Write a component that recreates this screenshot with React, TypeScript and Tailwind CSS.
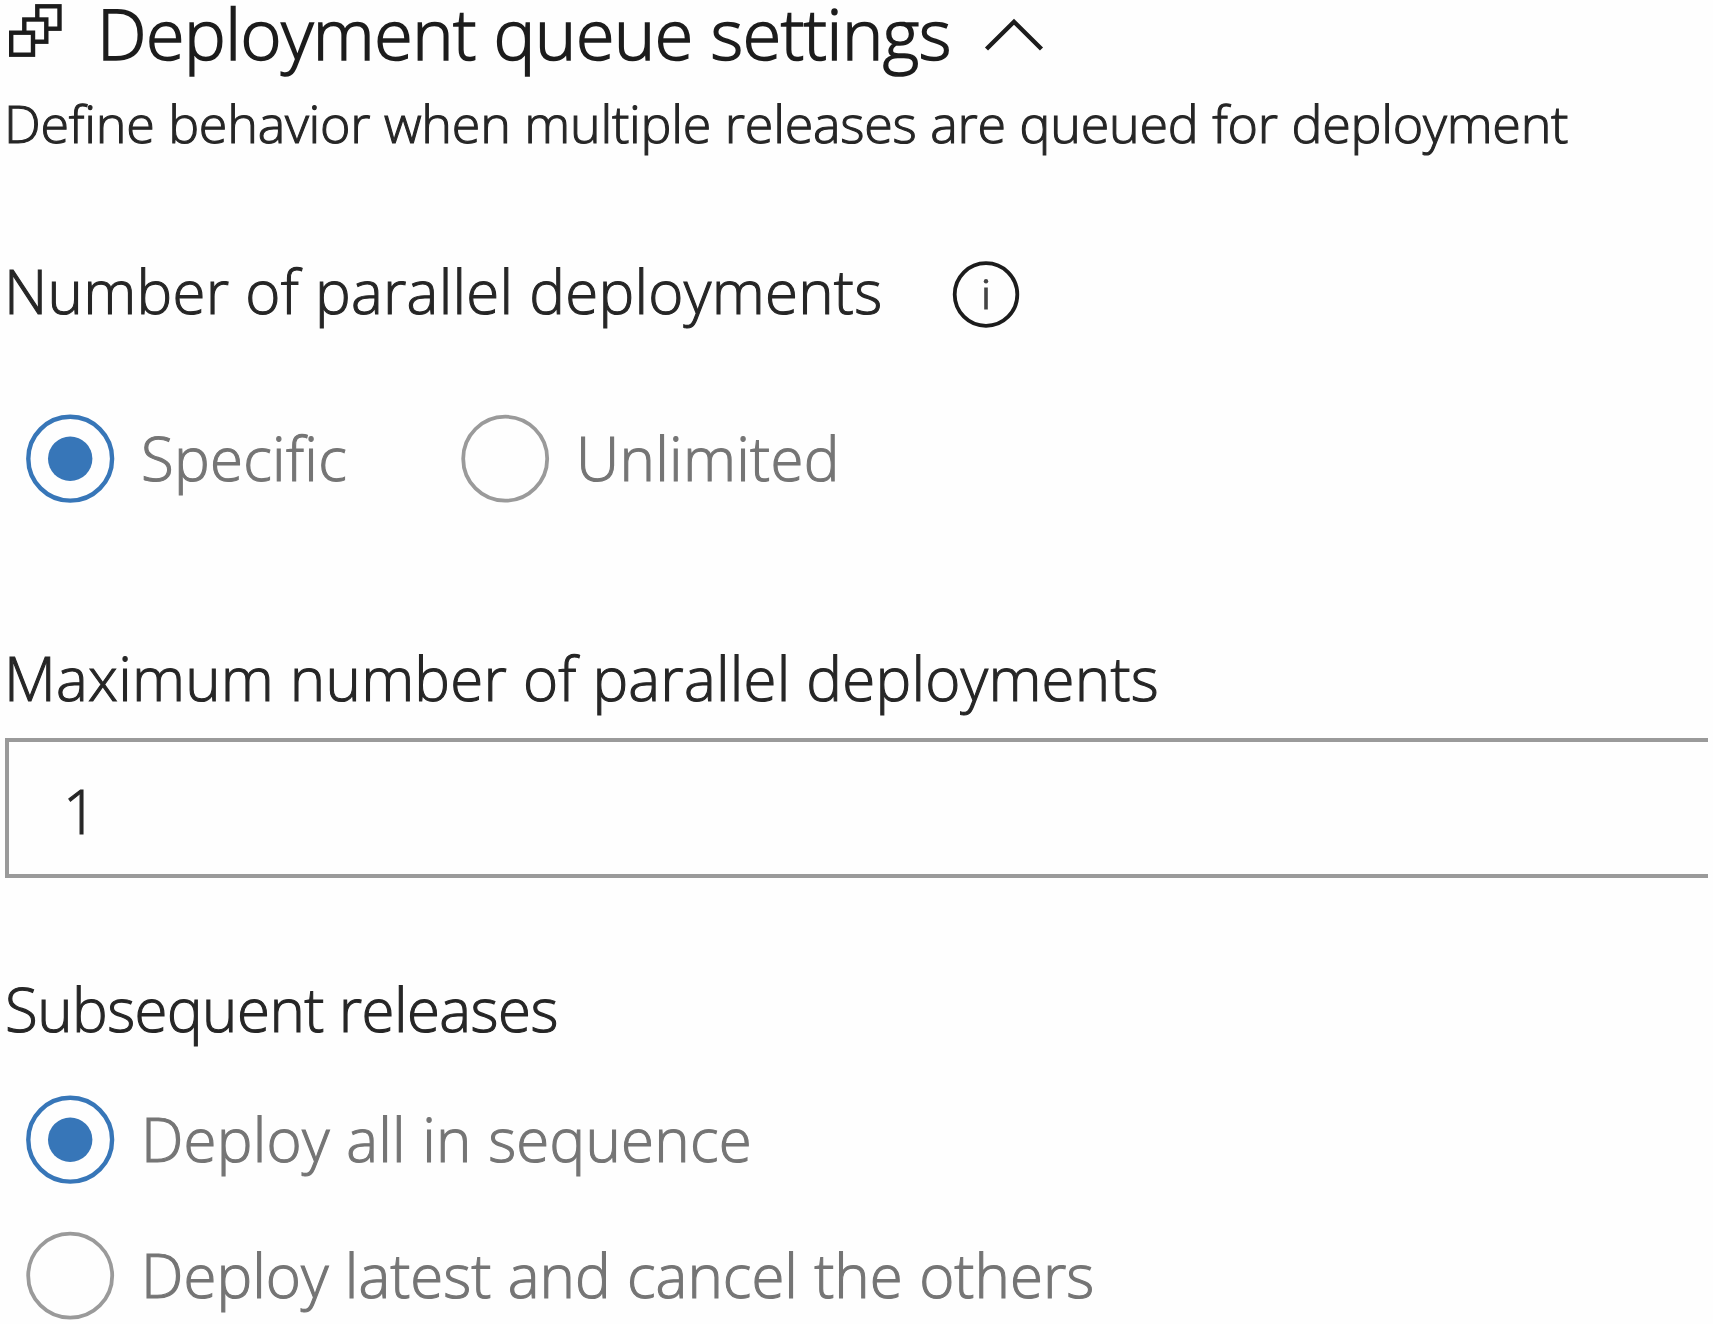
import type { ReactNode } from "react";

const HEADING_STROKE = "[-webkit-text-stroke:1.6px_currentColor]";
const TEXT_STROKE = "[-webkit-text-stroke:1.1px_currentColor]";

function QueueIcon() {
  return (
    <svg className="h-[64px] w-[64px] shrink-0" viewBox="0 0 64 64" fill="white" stroke="#1c1c1c" strokeWidth="4.4">
      <rect x="37.3" y="6.3" width="22.2" height="22.4" />
      <rect x="24.3" y="19.5" width="22" height="22.2" />
      <rect x="11.2" y="32.7" width="21.8" height="22" />
    </svg>
  );
}

function ChevronUp() {
  return (
    <svg className="h-[34px] w-[60px] shrink-0" viewBox="0 0 60 34" fill="none" stroke="#1c1c1c" strokeWidth="4.4">
      <path d="M2.5 31 L30 3.8 L57.5 31" />
    </svg>
  );
}

function InfoIcon() {
  return (
    <svg className="h-[68px] w-[68px] shrink-0" viewBox="0 0 68 68" fill="none" stroke="#1c1c1c">
      <circle cx="34" cy="33.5" r="31.3" strokeWidth="3.8" />
      <path d="M34 26.5 V48.5" strokeWidth="3.6" stroke="#444444" />
      <circle cx="34" cy="20.3" r="2.2" fill="#444444" stroke="none" />
    </svg>
  );
}

function Radio({
  checked = false,
  className = "",
  children,
}: {
  checked?: boolean;
  className?: string;
  children: ReactNode;
}) {
  return (
    <label className={`flex h-[89px] items-center ${className}`}>
      <svg className="h-[89px] w-[89px] shrink-0" viewBox="0 0 89 89" fill="none">
        {checked ? (
          <>
            <circle cx="44.2" cy="44.7" r="41.9" stroke="#3776b8" strokeWidth="4.4" />
            <circle cx="44.2" cy="44.7" r="22.2" fill="#3776b8" />
          </>
        ) : (
          <circle cx="44.2" cy="44.7" r="42" stroke="#9a9a9a" strokeWidth="3.8" />
        )}
      </svg>
      <span className={`ml-[26px] pb-[2px] text-[60px] leading-[80px] text-[#757575] ${TEXT_STROKE}`}>{children}</span>
    </label>
  );
}

export default function App() {
  return (
    <main className="h-[1324px] w-full bg-[#fefefe] font-['Open_Sans',sans-serif] font-light whitespace-nowrap text-[#262626]">
      <header className="flex h-[64px] items-center">
        <QueueIcon />
        <h2 className={`ml-[33px] pt-[1px] text-[70px] leading-[64px] tracking-[-0.45px] text-[#1c1c1c] ${HEADING_STROKE}`}>
          Deployment queue settings
        </h2>
        <span className="ml-[33px] pt-[5px]">
          <ChevronUp />
        </span>
      </header>
      <p className={`mt-[27px] ml-[4px] text-[52px] leading-[64px] tracking-[-0.24px] [word-spacing:0.4px] ${TEXT_STROKE}`}>
        Define behavior when multiple releases are queued for deployment
      </p>

      <section className="mt-[96px]">
        <div className="flex h-[80px] items-center">
          <span className={`ml-[4px] text-[60px] leading-[80px] tracking-[0.28px] ${TEXT_STROKE}`}>
            Number of parallel deployments
          </span>
          <span className="ml-[70px] pt-[7px]">
            <InfoIcon />
          </span>
        </div>
        <div className="mt-[83px] flex tracking-[0.3px]">
          <Radio checked className="ml-[26px] w-[435px]">
            Specific
          </Radio>
          <Radio>Unlimited</Radio>
        </div>
      </section>

      <section className="mt-[135px]">
        <div className={`ml-[4px] text-[60px] leading-[80px] tracking-[0.23px] ${TEXT_STROKE}`}>
          Maximum number of parallel deployments
        </div>
        <div className="mt-[20px] mr-[5px] ml-[5px] flex h-[140px] items-center border-y-4 border-l-4 border-[#9a9a9a] bg-[#fefefe] pt-[6px] pl-[54px]">
          <span className={`text-[60px] leading-[80px] ${TEXT_STROKE}`}>1</span>
        </div>
      </section>

      <section className="mt-[91px]">
        <div className={`ml-[5px] text-[60px] leading-[80px] tracking-[-0.56px] ${TEXT_STROKE}`}>
          Subsequent releases
        </div>
        <Radio checked className="mt-[46px] ml-[26px] tracking-[0.22px] [word-spacing:0.7px]">
          Deploy all in sequence
        </Radio>
        <Radio className="mt-[47px] ml-[26px] tracking-[0.03px] [word-spacing:0.7px]">Deploy latest and cancel the others</Radio>
      </section>
    </main>
  );
}
